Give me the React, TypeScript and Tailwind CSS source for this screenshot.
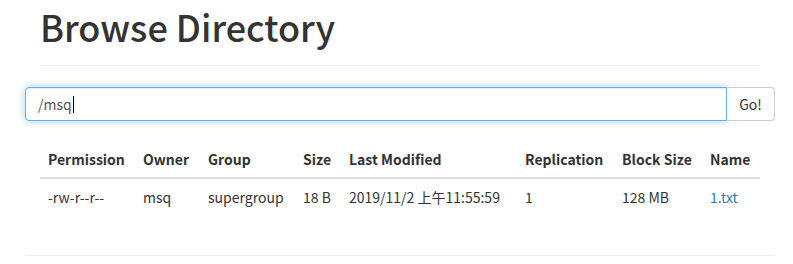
import React from "react";

const cols = [
  { h: "Permission", v: "-rw-r--r--" },
  { h: "Owner", v: "msq" },
  { h: "Group", v: "supergroup" },
  { h: "Size", v: "18 B" },
  { h: "Last Modified", v: "2019/11/2 上午11:55:59" },
  { h: "Replication", v: "1" },
  { h: "Block Size", v: "128 MB" },
  { h: "Name", v: "1.txt", link: true },
];

export default function App() {
  return (
    <div
      className="w-[793px] h-[264px] bg-white text-[#333] overflow-hidden"
      style={{ fontFamily: '"Noto Sans CJK SC", "Noto Sans", sans-serif' }}
    >
      <div className="ml-[40px] w-[720px] pt-[6px] pb-[19px] border-b border-[#eee]">
        <h1 className="text-[36px] leading-[40px] font-medium">Browse Directory</h1>
      </div>
      <div className="ml-[25px] w-[750px] mt-[21px] flex h-[34px]">
        <div className="flex-1 h-full flex items-center border border-[#66afe9] rounded-l-[4px] px-[12px] text-[14px] text-[#555] bg-white shadow-[inset_0_1px_1px_rgba(0,0,0,0.075),0_0_8px_rgba(102,175,233,0.6)]">
          <span>/msq</span>
          <span className="inline-block w-px h-[17px] bg-black ml-px" />
        </div>
        <button className="w-[48px] shrink-0 h-full border border-l-0 border-[#ccc] rounded-r-[4px] bg-white text-[14px] text-[#333]">
          Go!
        </button>
      </div>
      <div className="ml-[40px] w-[720px] mt-[20px] text-[14px] grid grid-cols-[95px_65px_95px_46px_176px_97px_88px_1fr]">
        {cols.map((c) => (
          <div key={c.h} className="p-[8px] leading-[20px] font-bold border-b-2 border-[#ddd] whitespace-nowrap">
            {c.h}
          </div>
        ))}
        {cols.map((c) => (
          <div key={c.h + "v"} className="p-[8px] leading-[20px] whitespace-nowrap">
            {c.link ? <span className="text-[#337ab7]">{c.v}</span> : c.v}
          </div>
        ))}
      </div>
      <div className="ml-[25px] w-[750px] mt-[40px] border-t border-[#eee]" />
    </div>
  );
}
